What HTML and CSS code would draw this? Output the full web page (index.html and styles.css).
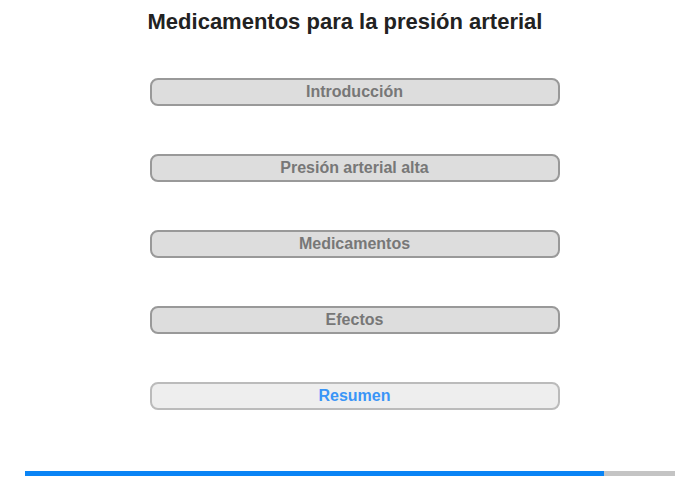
FILE: index.html
```html
<!DOCTYPE html>
<html lang="es">
<head>
  <meta charset="UTF-8" />
  <title>Medicamentos para la presión arterial</title>
  <link rel="stylesheet" href="styles.css">
</head>
<body>
  <div class="page">
    <h1>Medicamentos para la presión arterial</h1>

    <div class="menu">
      <button class="item">Introducción</button>
      <button class="item">Presión arterial alta</button>
      <button class="item">Medicamentos</button>
      <button class="item">Efectos</button>
      <button class="item current">Resumen</button>
    </div>

    <div class="progress">
      <div class="progress-fill" style="width: 89%"></div>
    </div>
  </div>
</body>
</html>
```

FILE: styles.css
```css
body {
  margin: 0;
  background-color: white;
  font-family: "Liberation Sans", Arial, sans-serif;
}
.page {
  width: 700px;
  height: 480px;
  display: flex;
  flex-direction: column;
  align-items: center;
}
h1 {
  font-size: 22px;
  font-weight: bold;
  color: #222;
  margin: 9px 0 0 -10px;
  line-height: 25px;
}
.menu {
  display: flex;
  flex-direction: column;
  gap: 48px;
  margin-top: 44px;
  margin-left: 9px;
}
.item {
  width: 410px;
  height: 28px;
  padding: 0;
  border: 2px solid #999;
  border-radius: 8px;
  background-color: #ddd;
  color: #777;
  font-family: "Liberation Sans", Arial, sans-serif;
  font-size: 16px;
  font-weight: bold;
  cursor: pointer;
}
.item.current {
  background-color: #eee;
  border-color: #bbb;
  color: #3a95f7;
}
.progress {
  width: 650px;
  height: 5px;
  margin-top: 61px;
  background-color: #c4c4c4;
}
.progress-fill {
  height: 100%;
  background-color: #0a84f5;
}
```
